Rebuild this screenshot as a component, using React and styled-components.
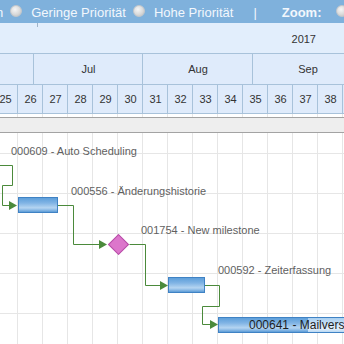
import React from 'react';
import styled, { createGlobalStyle } from 'styled-components';

const GlobalStyle = createGlobalStyle`
  html, body {
    margin: 0;
    padding: 0;
    background: #ffffff;
    overflow: hidden;
  }
  * { box-sizing: border-box; }
`;

const GRID = '#e6e6e6';
const HEADER_BORDER = '#a8c2da';
const LINK = '#4b8a3b';

const Page = styled.div`
  width: 344px;
  height: 344px;
  overflow: hidden;
  display: flex;
  flex-direction: column;
  font-family: "Liberation Sans", Arial, sans-serif;
`;

const Toolbar = styled.div`
  flex: 0 0 23px;
  display: flex;
  align-items: center;
  background: #7fb1dc;
  color: #f2f7fc;
  font-size: 13px;
  white-space: nowrap;
  padding-left: 0;
  margin-left: -4px;
  padding-top: 2px;
`;

const ToolLabel = styled.span`
  font-weight: ${p => (p.$bold ? 700 : 400)};
  line-height: 16px;
`;

const Radio = styled.span`
  flex: 0 0 12px;
  width: 12px;
  height: 12px;
  border-radius: 50%;
  margin: -3px ${p => p.$after ?? 9}px 0 ${p => p.$before ?? 7}px;
  background: radial-gradient(circle at 40% 35%, #f6f6f6 0%, #dadada 55%, #bdbdbd 100%);
  border: 1px solid #c4c8cc;
`;

const Divider = styled.span`
  margin: 0 25px 0 20px;
  line-height: 16px;
`;

const TimeHeader = styled.div`
  display: flex;
  flex-direction: column;
  background: #e2eefc;
  color: #333;
  font-size: 11px;
`;

const YearRow = styled.div`
  height: 31px;
  display: flex;
  align-items: center;
  justify-content: flex-end;
  padding: 2px 28px 0 0;
  border-bottom: 1px solid ${HEADER_BORDER};
  position: relative;
`;

const Tick = styled.span`
  position: absolute;
  left: 37px;
  top: 0;
  width: 1px;
  height: 4px;
  background: #9fb4c8;
`;

const Row = styled.div`
  display: flex;
  height: ${p => p.$h}px;
  margin-left: ${p => p.$offset}px;
  border-bottom: 1px solid ${HEADER_BORDER};
  background: #dfebfb;
`;

const Cell = styled.div`
  flex: 0 0 ${p => p.$w}px;
  display: flex;
  align-items: center;
  justify-content: center;
  border-right: 1px solid ${HEADER_BORDER};
  padding-left: 1px;
`;

const GridStrip = styled.div`
  height: 3px;
  background-image: linear-gradient(to right, ${GRID} 1px, transparent 1px);
  background-size: 25px 100%;
  background-position: 17px 0;
`;

const ScrollBand = styled.div`
  height: 16px;
  background: #eeeeee;
  border-top: 1px solid #a3a3a3;
  border-bottom: 1px solid #a3a3a3;
`;

const Chart = styled.div`
  flex: 1;
  position: relative;
  background-color: #fff;
  background-image:
    linear-gradient(to right, ${GRID} 1px, transparent 1px),
    linear-gradient(to bottom, ${GRID} 1px, transparent 1px);
  background-size: 25px 100%, 100% 40px;
  background-position: 17px 0, 0 20px;
`;

const Links = styled.svg`
  position: absolute;
  inset: 0;
  overflow: visible;
`;

const TaskLabel = styled.span`
  position: absolute;
  white-space: nowrap;
  font-size: 11px;
  line-height: 13px;
  color: #5f5f5f;
`;

const Bar = styled.div`
  position: absolute;
  height: 16px;
  border: 1px solid #3f82c4;
  background: linear-gradient(to bottom, #5e9fda 0%, #7fb3e4 35%, #b4d4f1 70%, #8dbbe6 85%, #5b9bd6 100%);
  overflow: hidden;
  display: flex;
  align-items: center;
`;

const Progress = styled.div`
  position: absolute;
  left: 0;
  top: 0;
  bottom: 0;
  background: linear-gradient(to bottom, #5e9fda 0%, #7fb3e4 35%, #b4d4f1 70%, #8dbbe6 85%, #5b9bd6 100%);
`;

const Remaining = styled.div`
  position: absolute;
  inset: 0;
  background: linear-gradient(to bottom, #a9cff0 0%, #cfe4f7 50%, #e4f0fb 75%, #b9d8f3 100%);
`;

const BarText = styled.span`
  position: relative;
  padding-left: 30px;
  font-size: 12px;
  color: #1e1e1e;
  white-space: nowrap;
`;

const Milestone = styled.div`
  position: absolute;
  width: 15px;
  height: 15px;
  transform: rotate(45deg);
  background: #dc76cb;
  border: 1px solid #b54ca6;
`;

const months = [
  { name: 'Jun', width: 110 },
  { name: 'Jul', width: 109 },
  { name: 'Aug', width: 110 },
  { name: 'Sep', width: 110 },
];

const weeks = Array.from({ length: 15 }, (_, i) => 25 + i);

const labels = [
  { text: '000609 - Auto Scheduling', x: 11, y: 12 },
  { text: '000556 - Änderungshistorie', x: 71, y: 52 },
  { text: '001754 - New milestone', x: 141, y: 91 },
  { text: '000592 - Zeiterfassung', x: 218, y: 131 },
];

// polylines in chart coordinates, last point = arrow tip
const links = [
  [[-2, 32], [12, 32], [12, 52], [2, 52], [2, 72], [17, 72]],
  [[57, 72], [73, 72], [73, 111], [107, 111]],
  [[129, 111], [145, 111], [145, 152], [168, 152]],
  [[204, 152], [219, 152], [219, 173], [202, 173], [202, 191], [218, 191]],
];

const Arrow = ({ x, y }) => (
  <polygon points={`${x - 8},${y - 4.5} ${x},${y} ${x - 8},${y + 4.5}`} fill={LINK} />
);

const App = () => {
  return (
    <>
      <GlobalStyle />
      <Page>
        <Toolbar>
          <ToolLabel>n</ToolLabel>
          <Radio />
          <ToolLabel>Geringe Priorität</ToolLabel>
          <Radio />
          <ToolLabel>Hohe Priorität</ToolLabel>
          <Divider>|</Divider>
          <ToolLabel $bold>Zoom:</ToolLabel>
          <Radio $before={15} />
        </Toolbar>

        <TimeHeader>
          <YearRow>
            <Tick />
            2017
          </YearRow>
          <Row $h={31} $offset={-76}>
            {months.map(m => (
              <Cell key={m.name} $w={m.width}>{m.name}</Cell>
            ))}
          </Row>
          <Row $h={29} $offset={-7}>
            {weeks.map(w => (
              <Cell key={w} $w={25}>{w}</Cell>
            ))}
          </Row>
        </TimeHeader>

        <GridStrip />
        <ScrollBand />

        <Chart>
          <Links width="344" height="220">
            {links.map((pts, i) => {
              const tip = pts[pts.length - 1];
              const line = pts
                .map(([x, y], j) => `${j === pts.length - 1 ? x - 7 : x + 0.5},${y + 0.5}`)
                .join(' ');
              return (
                <g key={i}>
                  <polyline points={line} fill="none" stroke={LINK} strokeWidth="1" />
                  <Arrow x={tip[0]} y={tip[1] + 0.5} />
                </g>
              );
            })}
          </Links>

          {labels.map(l => (
            <TaskLabel key={l.text} style={{ left: l.x, top: l.y }}>{l.text}</TaskLabel>
          ))}

          <Bar style={{ left: 18, top: 64, width: 40 }} />
          <Milestone style={{ left: 111, top: 104 }} />
          <Bar style={{ left: 168, top: 144, width: 37 }} />
          <Bar style={{ left: 218, top: 184, width: 200 }}>
            <Remaining />
            <Progress style={{ width: 89 }} />
            <BarText>000641 - Mailversand</BarText>
          </Bar>
        </Chart>
      </Page>
    </>
  );
};

export default App;
